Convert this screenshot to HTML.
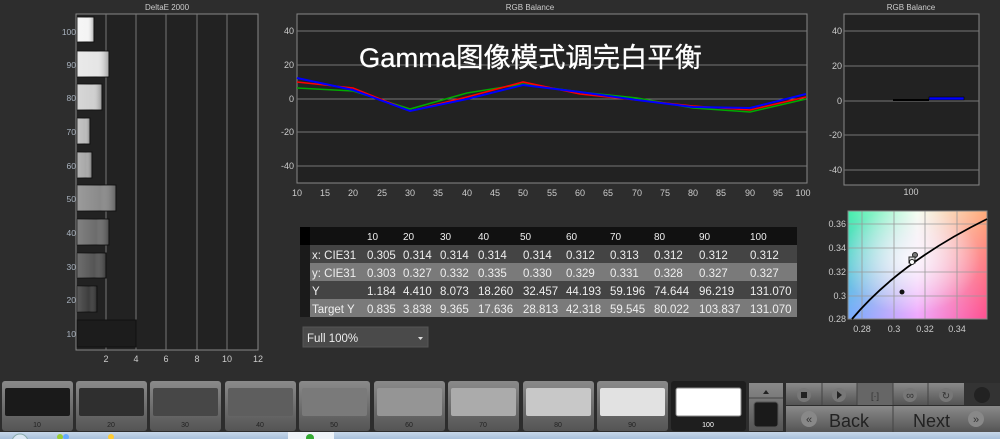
<!DOCTYPE html>
<html><head><meta charset="utf-8"><style>
html,body{margin:0;padding:0;background:#2d2d2d;width:1000px;height:439px;overflow:hidden}
svg{display:block}
text{font-family:"Liberation Sans","Noto Sans CJK SC",sans-serif}
</style></head><body>
<svg width="1000" height="439" viewBox="0 0 1000 439" xmlns="http://www.w3.org/2000/svg">
<defs>
<linearGradient id="bar" x1="0" x2="1" y1="0" y2="0"><stop offset="0" stop-color="#fff" stop-opacity="0.15"/><stop offset="0.6" stop-color="#fff" stop-opacity="0"/><stop offset="1" stop-color="#000" stop-opacity="0.3"/></linearGradient>
<linearGradient id="btn" x1="0" x2="0" y1="0" y2="1"><stop offset="0" stop-color="#8a8a8a"/><stop offset="1" stop-color="#545454"/></linearGradient>
<linearGradient id="cie1" x1="0" x2="1" y1="0" y2="0"><stop offset="0" stop-color="#44eeaa"/><stop offset="0.5" stop-color="#f4fff0"/><stop offset="1" stop-color="#ffaa77"/></linearGradient>
<linearGradient id="cie2" x1="0" x2="1" y1="0" y2="0"><stop offset="0" stop-color="#77aaff"/><stop offset="0.5" stop-color="#f0a8ff"/><stop offset="1" stop-color="#ff4f90"/></linearGradient>
<linearGradient id="fade" x1="0" x2="0" y1="0" y2="1"><stop offset="0" stop-color="#fff"/><stop offset="1" stop-color="#000"/></linearGradient>
<mask id="m"><rect x="848" y="211" width="139" height="108" fill="url(#fade)"/></mask>
<radialGradient id="wh" cx="0.45" cy="0.45" r="0.5"><stop offset="0" stop-color="#fff" stop-opacity="0.8"/><stop offset="1" stop-color="#fff" stop-opacity="0"/></radialGradient>
<linearGradient id="task" x1="0" x2="0" y1="0" y2="1"><stop offset="0" stop-color="#c8d8ea"/><stop offset="1" stop-color="#a8c0dc"/></linearGradient>
</defs>
<rect width="1000" height="439" fill="#2d2d2d"/>

<!-- DeltaE -->
<text x="167" y="10" fill="#ccc" font-size="8" text-anchor="middle">DeltaE 2000</text>
<rect x="76" y="14" width="182" height="336" fill="#222" stroke="#888"/>
<g stroke="#777"><line x1="106" y1="14" x2="106" y2="350"/><line x1="136" y1="14" x2="136" y2="350"/><line x1="166" y1="14" x2="166" y2="350"/><line x1="197" y1="14" x2="197" y2="350"/><line x1="227" y1="14" x2="227" y2="350"/></g>
<g stroke="#111">
<rect x="77" y="17" width="17" height="25" fill="#f4f4f4"/>
<rect x="77" y="51" width="32" height="26" fill="#e6e6e6"/>
<rect x="77" y="84" width="25" height="26" fill="#d0d0d0"/>
<rect x="77" y="118" width="13" height="26" fill="#bbb"/>
<rect x="77" y="152" width="15" height="26" fill="#a8a8a8"/>
<rect x="77" y="185" width="39" height="26" fill="#8a8a8a"/>
<rect x="77" y="219" width="32" height="26" fill="#6c6c6c"/>
<rect x="77" y="253" width="29" height="25" fill="#555"/>
<rect x="77" y="286" width="20" height="26" fill="#3d3d3d"/>
<rect x="77" y="320" width="59" height="27" fill="#1c1c1c"/>
</g>
<g fill="url(#bar)">
<rect x="77" y="17" width="17" height="25"/><rect x="77" y="51" width="32" height="26"/><rect x="77" y="84" width="25" height="26"/><rect x="77" y="118" width="13" height="26"/><rect x="77" y="152" width="15" height="26"/><rect x="77" y="185" width="39" height="26"/><rect x="77" y="219" width="32" height="26"/><rect x="77" y="253" width="29" height="25"/><rect x="77" y="286" width="20" height="26"/>
</g>
<g fill="#aab4c0" font-size="8.5" text-anchor="end">
<text x="76" y="35">100</text><text x="76" y="68">90</text><text x="76" y="101">80</text><text x="76" y="135">70</text><text x="76" y="169">60</text><text x="76" y="202">50</text><text x="76" y="236">40</text><text x="76" y="270">30</text><text x="76" y="303">20</text><text x="76" y="337">10</text>
</g>
<g fill="#ccc" font-size="9" text-anchor="middle">
<text x="106" y="362">2</text><text x="136" y="362">4</text><text x="166" y="362">6</text><text x="197" y="362">8</text><text x="227" y="362">10</text><text x="258" y="362">12</text>
</g>

<!-- RGB Balance main -->
<text x="530" y="10" fill="#ccc" font-size="8" text-anchor="middle">RGB Balance</text>
<rect x="297" y="14" width="510" height="169" fill="#222" stroke="#888"/>
<g stroke="#777"><line x1="297" y1="31" x2="807" y2="31"/><line x1="297" y1="65" x2="807" y2="65"/><line x1="297" y1="99" x2="807" y2="99"/><line x1="297" y1="132" x2="807" y2="132"/><line x1="297" y1="166" x2="807" y2="166"/></g>
<g fill="#ccc" font-size="9" text-anchor="end">
<text x="294" y="34">40</text><text x="294" y="68">20</text><text x="294" y="102">0</text><text x="294" y="135">-20</text><text x="294" y="169">-40</text>
</g>
<g fill="#ccc" font-size="9" text-anchor="middle">
<text x="297" y="196">10</text><text x="325" y="196">15</text><text x="353" y="196">20</text><text x="382" y="196">25</text><text x="410" y="196">30</text><text x="438" y="196">35</text><text x="467" y="196">40</text><text x="495" y="196">45</text><text x="523" y="196">50</text><text x="552" y="196">55</text><text x="580" y="196">60</text><text x="608" y="196">65</text><text x="637" y="196">70</text><text x="665" y="196">75</text><text x="693" y="196">80</text><text x="721" y="196">85</text><text x="750" y="196">90</text><text x="778" y="196">95</text><text x="803" y="196">100</text>
</g>
<g fill="none" stroke-width="1.6">
<polyline stroke="#0a0" points="297,88 353,91 410,109 467,93 523,84 580,92 637,98 693,108 750,112 806,99"/>
<polyline stroke="#f00" points="297,82 353,88 410,111 467,97 523,82 580,94 637,100 693,106 750,110 806,97"/>
<polyline stroke="#00f" stroke-width="2" points="297,78 353,90 410,111 467,99 523,85 580,92 637,100 693,107 750,108 806,94"/>
</g>
<text x="359" y="67" fill="#fff" font-size="27" stroke="#fff" stroke-width="0.3" textLength="343" lengthAdjust="spacingAndGlyphs">Gamma图像模式调完白平衡</text>

<!-- RGB Balance small -->
<text x="911" y="10" fill="#ccc" font-size="8" text-anchor="middle">RGB Balance</text>
<rect x="844" y="14" width="135" height="171" fill="#222" stroke="#888"/>
<g stroke="#777"><line x1="844" y1="31" x2="979" y2="31"/><line x1="844" y1="66" x2="979" y2="66"/><line x1="844" y1="101" x2="979" y2="101"/><line x1="844" y1="135" x2="979" y2="135"/><line x1="844" y1="170" x2="979" y2="170"/></g>
<g fill="#ccc" font-size="9" text-anchor="end">
<text x="842" y="34">40</text><text x="842" y="69">20</text><text x="842" y="104">0</text><text x="842" y="138">-20</text><text x="842" y="173">-40</text>
</g>
<text x="911" y="195" fill="#ccc" font-size="9" text-anchor="middle">100</text>
<rect x="893" y="99" width="36" height="2" fill="#000"/>
<rect x="929" y="97" width="35" height="3" fill="#00f" stroke="#000" stroke-width="0.6"/>

<!-- CIE -->
<rect x="848" y="211" width="139" height="108" fill="url(#cie2)"/>
<rect x="848" y="211" width="139" height="108" fill="url(#cie1)" mask="url(#m)"/>
<rect x="848" y="211" width="139" height="108" fill="url(#wh)"/>
<g stroke="#999" stroke-width="0.8"><line x1="862" y1="211" x2="862" y2="319"/><line x1="894" y1="211" x2="894" y2="319"/><line x1="925" y1="211" x2="925" y2="319"/><line x1="957" y1="211" x2="957" y2="319"/><line x1="848" y1="224" x2="987" y2="224"/><line x1="848" y1="248" x2="987" y2="248"/><line x1="848" y1="272" x2="987" y2="272"/><line x1="848" y1="296" x2="987" y2="296"/></g>
<rect x="848" y="211" width="139" height="108" fill="none" stroke="#888"/>
<path d="M852,319 Q900,262 987,219" stroke="#000" stroke-width="1.8" fill="none"/>
<circle cx="902" cy="292" r="2.5" fill="#111"/>
<circle cx="915" cy="255" r="2.5" fill="#777" stroke="#222"/>
<rect x="909" y="257" width="6" height="6" fill="#ddd" stroke="#222"/>
<circle cx="912" cy="262" r="2.5" fill="#fff" stroke="#222"/>
<g fill="#ccc" font-size="9" text-anchor="end">
<text x="846" y="227">0.36</text><text x="846" y="251">0.34</text><text x="846" y="275">0.32</text><text x="846" y="299">0.3</text><text x="846" y="322">0.28</text>
</g>
<g fill="#ccc" font-size="9" text-anchor="middle">
<text x="862" y="332">0.28</text><text x="894" y="332">0.3</text><text x="925" y="332">0.32</text><text x="957" y="332">0.34</text>
</g>

<!-- Table -->
<rect x="300" y="227" width="497" height="18" fill="#111"/>
<rect x="300" y="227" width="10" height="90" fill="#1a1a1a"/>
<rect x="300" y="227" width="10" height="18" fill="#000"/>
<rect x="310" y="245" width="487" height="18" fill="#444"/>
<rect x="310" y="263" width="487" height="18" fill="#7a7a7a"/>
<rect x="310" y="281" width="487" height="18" fill="#444"/>
<rect x="310" y="299" width="487" height="18" fill="#7a7a7a"/>
<g fill="#eee" font-size="11.5">
<g font-size="10"><text x="367" y="240">10</text><text x="403" y="240">20</text><text x="440" y="240">30</text><text x="478" y="240">40</text><text x="520" y="240">50</text><text x="566" y="240">60</text><text x="610" y="240">70</text><text x="654" y="240">80</text><text x="699" y="240">90</text><text x="750" y="240">100</text></g>
<text x="312" y="259">x: CIE31</text><text x="367" y="259">0.305</text><text x="403" y="259">0.314</text><text x="440" y="259">0.314</text><text x="478" y="259">0.314</text><text x="523" y="259">0.314</text><text x="566" y="259">0.312</text><text x="610" y="259">0.313</text><text x="654" y="259">0.312</text><text x="699" y="259">0.312</text><text x="750" y="259">0.312</text>
<text x="312" y="277">y: CIE31</text><text x="367" y="277">0.303</text><text x="403" y="277">0.327</text><text x="440" y="277">0.332</text><text x="478" y="277">0.335</text><text x="523" y="277">0.330</text><text x="566" y="277">0.329</text><text x="610" y="277">0.331</text><text x="654" y="277">0.328</text><text x="699" y="277">0.327</text><text x="750" y="277">0.327</text>
<text x="312" y="295">Y</text><text x="367" y="295">1.184</text><text x="403" y="295">4.410</text><text x="440" y="295">8.073</text><text x="478" y="295">18.260</text><text x="523" y="295">32.457</text><text x="566" y="295">44.193</text><text x="610" y="295">59.196</text><text x="654" y="295">74.644</text><text x="699" y="295">96.219</text><text x="750" y="295">131.070</text>
<text x="312" y="313">Target Y</text><text x="367" y="313">0.835</text><text x="403" y="313">3.838</text><text x="440" y="313">9.365</text><text x="478" y="313">17.636</text><text x="523" y="313">28.813</text><text x="566" y="313">42.318</text><text x="610" y="313">59.545</text><text x="654" y="313">80.022</text><text x="699" y="313">103.837</text><text x="750" y="313">131.070</text>
</g>
<rect x="303" y="327" width="125" height="20" fill="#4a4a4a" stroke="#555"/>
<text x="307" y="342" fill="#eee" font-size="11.5">Full  100%</text>
<path d="M418,337 l5,0 l-2.5,3z" fill="#ddd"/>

<!-- bottom swatches -->
<g font-size="7" fill="#222" text-anchor="middle">
<rect x="2" y="381" width="71" height="50" rx="3" fill="url(#btn)"/><rect x="5" y="388" width="65" height="28" rx="2" fill="#1a1a1a"/><text x="37" y="427">10</text>
<rect x="76" y="381" width="71" height="50" rx="3" fill="url(#btn)"/><rect x="79" y="388" width="65" height="28" rx="2" fill="#2f2f2f"/><text x="111" y="427">20</text>
<rect x="150" y="381" width="71" height="50" rx="3" fill="url(#btn)"/><rect x="153" y="388" width="65" height="28" rx="2" fill="#474747"/><text x="185" y="427">30</text>
<rect x="225" y="381" width="71" height="50" rx="3" fill="url(#btn)"/><rect x="228" y="388" width="65" height="28" rx="2" fill="#5e5e5e"/><text x="260" y="427">40</text>
<rect x="299" y="381" width="71" height="50" rx="3" fill="url(#btn)"/><rect x="302" y="388" width="65" height="28" rx="2" fill="#7a7a7a"/><text x="334" y="427">50</text>
<rect x="374" y="381" width="71" height="50" rx="3" fill="url(#btn)"/><rect x="377" y="388" width="65" height="28" rx="2" fill="#959595"/><text x="409" y="427">60</text>
<rect x="448" y="381" width="71" height="50" rx="3" fill="url(#btn)"/><rect x="451" y="388" width="65" height="28" rx="2" fill="#ababab"/><text x="483" y="427">70</text>
<rect x="523" y="381" width="71" height="50" rx="3" fill="url(#btn)"/><rect x="526" y="388" width="65" height="28" rx="2" fill="#c8c8c8"/><text x="558" y="427">80</text>
<rect x="597" y="381" width="71" height="50" rx="3" fill="url(#btn)"/><rect x="600" y="388" width="65" height="28" rx="2" fill="#e2e2e2"/><text x="632" y="427">90</text>
<rect x="671" y="381" width="75" height="50" rx="3" fill="#1e1e1e"/><rect x="676" y="388" width="65" height="28" rx="2" fill="#fff" stroke="#888"/><text x="708" y="427" fill="#fff">100</text>
</g>
<rect x="749" y="383" width="34" height="48" fill="url(#btn)"/>
<line x1="749" y1="398" x2="783" y2="398" stroke="#444"/>
<path d="M763,394 l3,-4 l3,4z" fill="#222"/>
<rect x="754" y="402" width="24" height="25" rx="3" fill="#1a1a1a" stroke="#555"/>
<g>
<rect x="786" y="383" width="178" height="22" fill="url(#btn)"/>
<rect x="857" y="383" width="36" height="22" fill="#666"/>
<rect x="964" y="383" width="36" height="22" fill="#333"/>
<circle cx="982" cy="395" r="8" fill="#222"/>
<g stroke="#444"><line x1="822" y1="383" x2="822" y2="405"/><line x1="857" y1="383" x2="857" y2="405"/><line x1="893" y1="383" x2="893" y2="405"/><line x1="928" y1="383" x2="928" y2="405"/></g>
<g fill="#777"><circle cx="804" cy="395" r="7"/><circle cx="839" cy="395" r="7"/><circle cx="910" cy="395" r="7"/><circle cx="946" cy="395" r="7"/></g>
<rect x="801" y="392" width="6" height="6" fill="#222"/>
<path d="M837,391 l5,4 l-5,4z" fill="#222"/>
<text x="875" y="399" fill="#333" font-size="9" text-anchor="middle">[·]</text>
<text x="910" y="399" fill="#333" font-size="11" text-anchor="middle">∞</text>
<text x="946" y="399" fill="#333" font-size="10" text-anchor="middle">↻</text>
<rect x="786" y="406" width="214" height="26" fill="url(#btn)"/>
<line x1="893" y1="406" x2="893" y2="432" stroke="#444"/>
<circle cx="809" cy="419" r="8" fill="#888"/><text x="809" y="423" fill="#333" font-size="11" text-anchor="middle">«</text>
<circle cx="976" cy="419" r="8" fill="#888"/><text x="976" y="423" fill="#333" font-size="11" text-anchor="middle">»</text>
<text x="829" y="427" fill="#222" font-size="18">Back</text>
<text x="913" y="427" fill="#222" font-size="18">Next</text>
</g>
<!-- taskbar -->
<rect x="0" y="432" width="1000" height="7" fill="url(#task)"/>
<rect x="288" y="432" width="46" height="7" fill="#eef3f8"/>
<circle cx="20" cy="442" r="8" fill="#dce8f4" stroke="#8aa"/>
<circle cx="60" cy="437" r="3" fill="#9c3"/><circle cx="66" cy="437" r="3" fill="#6af"/>
<circle cx="111" cy="437" r="3" fill="#fc3"/>
<circle cx="310" cy="438" r="4" fill="#3a3"/>
</svg>
</body></html>
